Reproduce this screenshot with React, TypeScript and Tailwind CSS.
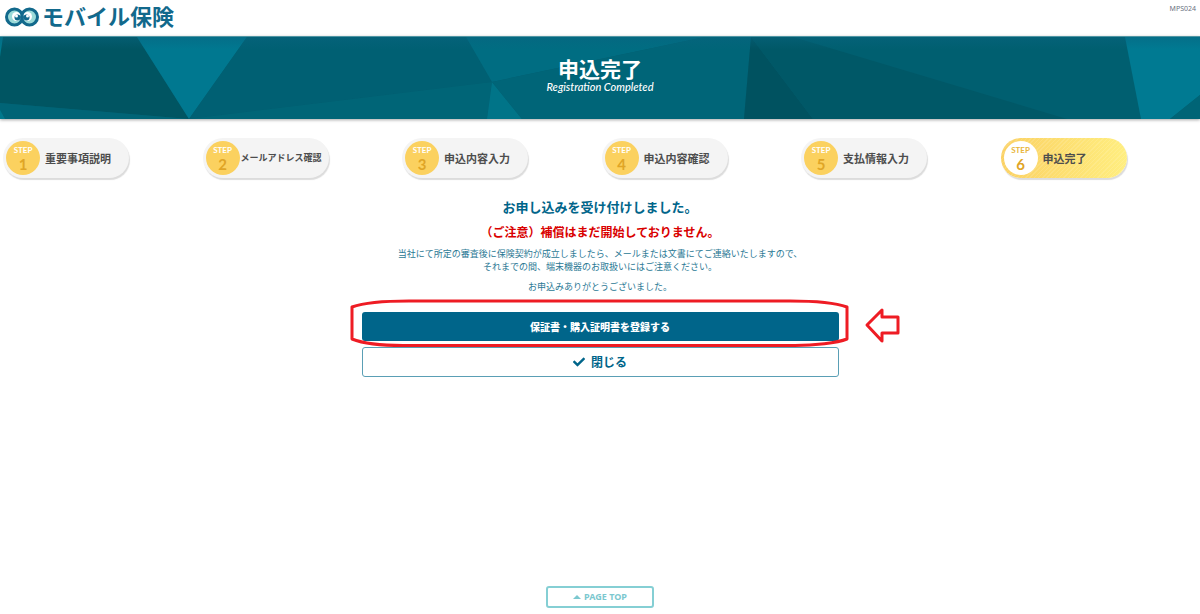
import { FaCheck } from "react-icons/fa";
import clsx from "clsx";

const steps = [
  { no: 1, label: "重要事項説明" },
  { no: 2, label: "メールアドレス確認", small: true },
  { no: 3, label: "申込内容入力" },
  { no: 4, label: "申込内容確認" },
  { no: 5, label: "支払情報入力" },
  { no: 6, label: "申込完了", active: true },
];

const Logo = () => (
  <a href="#" className="flex items-start gap-[3px] text-[#12698c]">
    <svg width="34" height="24" viewBox="0 0 34 24" aria-hidden="true">
      <circle cx="9.5" cy="12" r="8" fill="#9bdad8" />
      <circle cx="24.5" cy="12" r="8" fill="#9bdad8" />
      <circle cx="11.5" cy="11.5" r="4.5" fill="#fff" />
      <circle cx="22.5" cy="11.5" r="4.5" fill="#fff" />
      <circle cx="12.5" cy="12.5" r="3" fill="#12698c" />
      <circle cx="21.500" cy="12.5" r="3" fill="#12698c" />
      <circle cx="11.5" cy="11" r="1.500" fill="#fff" />
      <circle cx="22.5" cy="11" r="1.500" fill="#fff" />
      <g fill="none" stroke="#12698c" strokeWidth="3">
        <circle cx="9.5" cy="12" r="8" />
        <circle cx="24.5" cy="12" r="8" />
      </g>
    </svg>
    <span className="text-[22px] leading-5 font-bold">モバイル保険</span>
  </a>
);

const Hero = () => (
  <div className="relative border-t border-[#4f96a4] bg-[#005f70] shadow-[0_1px_3px_rgba(0,0,0,0.35)]">
    <svg
      className="absolute inset-0 h-full w-full"
      viewBox="0 0 1200 82"
      preserveAspectRatio="none"
      aria-hidden="true"
    >
      <defs>
        <linearGradient id="shade" x1="0" y1="0" x2="0" y2="1">
          <stop offset="0" stopColor="#0a6480" stopOpacity="0.5" />
          <stop offset="0.15" stopColor="#0a6480" stopOpacity="0" />
        </linearGradient>
      </defs>
      <path d="M0 0H137L189 82L0 66Z" fill="#005562" />
      <path d="M0 66L189 82H0Z" fill="#006476" />
      <path d="M0 0H3L0 20ZM0 73L5 82H0Z" fill="#00788c" />
      <path d="M137 0H247L189 82Z" fill="#007890" />
      <path d="M247 0H466L492 45L189 82Z" fill="#006073" />
      <path d="M189 82L492 45L487 82Z" fill="#006577" />
      <path d="M492 45L522 82H487Z" fill="#007488" />
      <path d="M466 0H705L492 45Z" fill="#006d82" />
      <path d="M705 0H751L744 82H522L492 45Z" fill="#006578" />
      <path d="M751 0L813 82H744Z" fill="#005260" />
      <path d="M751 0H793L1067 82H813Z" fill="#005867" />
      <path d="M1125 0H1200V58L1170 82H1141Z" fill="#007a92" />
      <path d="M1200 58V82H1170Z" fill="#006476" />
      <rect width="1200" height="82" fill="url(#shade)" />
    </svg>
    <div className="relative flex h-[82px] flex-col items-center pt-[19px] text-white">
      <h1 className="text-[21px] leading-6 font-bold">申込完了</h1>
      <p className="font-['Lato'] text-[11px] leading-[14px] font-medium italic">
        Registration Completed
      </p>
    </div>
  </div>
);

const Steps = () => (
  <ol className="grid grid-cols-6 pt-[19px] pl-[3px]">
    {steps.map(({ no, label, small, active }) => (
      <li key={no}>
        <div
          className={clsx(
            "flex h-10 w-[126px] items-center rounded-full pl-[3px] shadow-[1px_2px_1px_#dcdcdc]",
            active
              ? "bg-[repeating-linear-gradient(135deg,#ffffff1f_0_1px,transparent_1px_3px),linear-gradient(to_right,#fbd163,#ffee80)]"
              : "bg-[#f4f4f4]",
            small ? "gap-px" : "gap-[5px]",
          )}
        >
          <div
            className={clsx(
              "flex h-[34px] w-[34px] shrink-0 flex-col items-center rounded-full pt-1 font-['Lato'] font-bold",
              active ? "bg-white" : "bg-[#fbd15f]",
            )}
          >
            <span
              className={clsx(
                "text-[8px] leading-[10px]",
                active ? "text-[#e8b53a]" : "text-white",
              )}
            >
              STEP
            </span>
            <span className="text-[15px] leading-[18px] text-[#e0a526]">
              {no}
            </span>
          </div>
          <span
            className={clsx(
              "leading-4 font-bold whitespace-nowrap text-[#4d4d4d]",
              small ? "text-[9px]" : "text-[11px]",
            )}
          >
            {label}
          </span>
        </div>
      </li>
    ))}
  </ol>
);

const Callout = () => (
  <svg
    className="pointer-events-none absolute -top-[13px] -left-[13px]"
    width="552"
    height="50"
    viewBox="0 0 552 50"
    fill="none"
    stroke="#ee1c24"
    strokeWidth="3"
    strokeLinejoin="round"
    aria-hidden="true"
  >
    <path d="M3 8C14 4 38 2 60 2H441C465 2 487 4 498 8V40C488 44 465 46.500 446 46.500H54C34 46.500 13 44 3 40Z" />
    <path d="M518 26L533 11V18H549V34H533V42Z" />
  </svg>
);

const App = () => {
  return (
    <div className="flex min-h-screen flex-col bg-white font-['Noto_Sans_CJK_JP',sans-serif] text-[#2a7894]">
      <header className="flex h-9 items-start justify-between pt-[5px] pr-1 pl-[5px]">
        <Logo />
        <span className="font-['Noto_Sans'] text-[7px] leading-2 text-gray-500">
          MPS024
        </span>
      </header>
      <Hero />
      <Steps />
      <main className="flex flex-col items-center pt-[19px] text-center">
        <h2 className="text-[13px] leading-5 font-bold text-[#00658a]">
          お申し込みを受け付けしました。
        </h2>
        <p className="mt-[5px] text-[12px] leading-5 font-bold text-[#d90000]">
          （ご注意）補償はまだ開始しておりません。
        </p>
        <p className="mt-[5px] text-[9px] leading-[13px]">
          当社にて所定の審査後に保険契約が成立しましたら、メールまたは文書にてご連絡いたしますので、
          <br />
          それまでの間、端末機器のお取扱いにはご注意ください。
        </p>
        <p className="mt-[7px] text-[9px] leading-[13px]">
          お申込みありがとうございました。
        </p>
        <div className="relative mt-[19px] flex w-[477px] flex-col gap-[6px]">
          <button
            type="button"
            className="h-[29px] rounded-[3px] bg-[#00658a] text-[10px] font-black text-white"
          >
            保証書・購入証明書を登録する
          </button>
          <button
            type="button"
            className="flex h-[30px] items-center justify-center gap-[6px] rounded-[3px] border border-[#5a9fb5] text-[12px] font-bold text-[#00658a]"
          >
            <FaCheck aria-hidden="true" />
            閉じる
          </button>
          <Callout />
        </div>
      </main>
      <footer className="mt-auto flex justify-center pb-[6px]">
        <a
          href="#"
          className="flex h-[22px] w-[108px] items-center justify-center gap-[3px] rounded-[3px] border-2 border-[#85cfd4] font-['Noto_Sans'] text-[9px] font-bold text-[#7cc8cf]"
        >
          <svg width="8" height="4" viewBox="0 0 8 4" aria-hidden="true">
            <path d="M4 0L8 4H0Z" fill="currentColor" />
          </svg>
          PAGE TOP
        </a>
      </footer>
    </div>
  );
};

export default App;
